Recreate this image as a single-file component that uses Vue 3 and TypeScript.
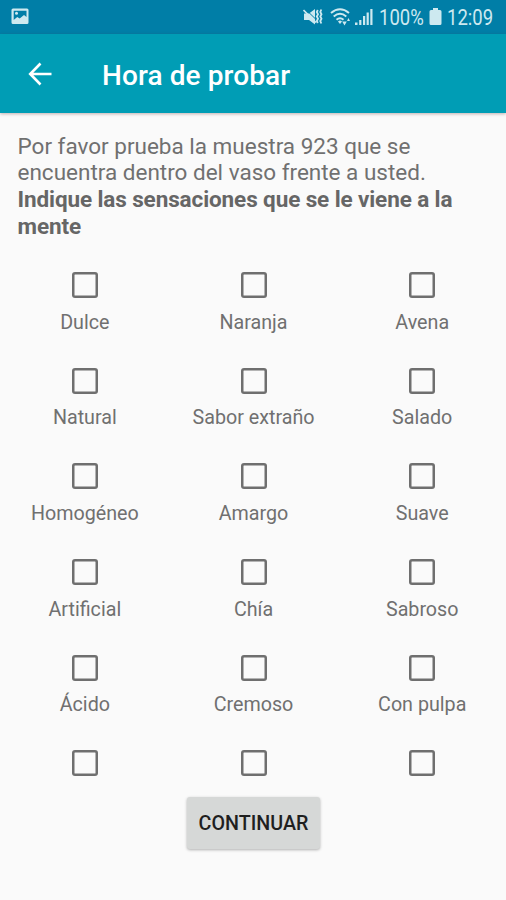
<script setup lang="ts">
import { ref } from 'vue'

interface Sensation {
  id: number
  label: string
}

const names: string[] = [
  'Dulce', 'Naranja', 'Avena',
  'Natural', 'Sabor extraño', 'Salado',
  'Homogéneo', 'Amargo', 'Suave',
  'Artificial', 'Chía', 'Sabroso',
  'Ácido', 'Cremoso', 'Con pulpa',
  '', '', '',
]
const sensations: Sensation[] = names.map((label, id) => ({ id, label }))
const selected = ref<number[]>([])

function toggle(id: number): void {
  selected.value = selected.value.includes(id)
    ? selected.value.filter((item) => item !== id)
    : [...selected.value, id]
}
</script>

<template>
  <div class="screen">
    <div class="status">
      <svg class="picture" width="18" height="17" viewBox="0 0 18 17">
        <path fill-rule="evenodd" d="M2 .5h14q1.500 0 1.500 1.500v12.500q0 1.500-1.500 1.500H2Q.5 16 .5 14.500V2Q.5.5 2 .5zM2.700 2.700v9.300l3.500-3 2.500 1.500 4.300-3.500 2.500 2V2.700z" />
        <circle cx="5.500" cy="5.300" r="1.500" />
      </svg>
      <div class="indicators">
        <svg class="mute" width="20" height="18" viewBox="0 0 20 18">
          <path d="M1 5.500h5L12 1v15.500L6 12H1z" />
          <path class="cut" d="M4 2.700l9 8.700" />
          <path class="line" d="M.5 2l12.500 12.500" />
          <path class="line wave" d="M14.800 2l-1 2 1.200 2.300-1.200 2.200 1.200 2.300-1.200 2.200 1 2M18.300 1.500l-1 2.500 1.200 2.300-1.200 2.200 1.200 2.300-1.200 2.200 1 2.500" />
        </svg>
        <svg class="wifi" width="21" height="18" viewBox="0 0 21 18">
          <path class="line arc" d="M1 5q9-7.500 18 0M3.700 8.400q6.300-5.300 12.600 0M6.500 11.700q3.500-3 7 0" />
          <path d="M8 13.500q2-1.800 4 0l-2 2.500z" />
          <path d="M12.200 13.500h4.600L14.500 17.500zM17 13h3l-1.500-3z" />
        </svg>
        <svg class="signal" width="18" height="18" viewBox="0 0 18 18">
          <path d="M0 14.500h2.500V17H0zM4.200 12h2.200v5H4.200zM8 8h2.200v9H8zM11.600 4.500h2.200V17h-2.200zM15.300 1h2.200v16h-2.200z" />
        </svg>
        <span class="percent"><span>100%</span></span>
        <svg class="battery" width="13" height="18" viewBox="0 0 13 18">
          <path d="M4 0h5v2h2q1.500 0 1.500 1.500v12q0 1.500-1.500 1.500H2Q.5 17 .5 15.500v-12Q.5 2 2 2h2z" />
        </svg>
        <span class="clock"><span>12:09</span></span>
      </div>
    </div>
    <header class="bar">
      <svg class="back" width="24" height="24" viewBox="0 0 24 24">
        <path d="M12.500 1.500L2.200 12l10.300 10.500M2.500 12h21" />
      </svg>
      <h1>Hora de probar</h1>
    </header>
    <main>
      <p class="intro">
        Por favor prueba la muestra 923 que se<br />encuentra dentro del vaso frente a usted.<br />
        <strong>Indique las sensaciones que se le viene a la<br />mente</strong>
      </p>
      <div class="grid">
        <div v-for="item in sensations" :key="item.id" class="cell" @click="toggle(item.id)">
          <span class="box" :class="{ on: selected.includes(item.id) }"></span>
          <span class="label">{{ item.label }}</span>
        </div>
      </div>
      <button class="next" type="button">CONTINUAR</button>
    </main>
  </div>
</template>

<style>
body {
  margin: 0;
  background: #fafafa;
}
</style>

<style scoped>
.screen {
  width: 506px;
  height: 900px;
  overflow: hidden;
  background: #fafafa;
  color: #707070;
  font-family: Roboto, "Liberation Sans", sans-serif;
}
.status {
  display: flex;
  justify-content: space-between;
  box-sizing: border-box;
  height: 34px;
  padding: 8px 11px 0 11px;
  background: #007ea7;
  color: #cde9f0;
}
.status svg {
  fill: #cde9f0;
}
.indicators {
  display: flex;
}
.status .line {
  fill: none;
  stroke: #cde9f0;
  stroke-width: 1.600;
}
.status .wave {
  stroke-width: 1.800;
}
.status .arc {
  stroke-width: 2;
}
.status .cut {
  fill: none;
  stroke: #007ea7;
  stroke-width: 1;
}
.mute {
  margin-right: 7px;
}
.wifi {
  margin-right: 4px;
}
.signal {
  margin-right: 6px;
}
.percent,
.clock {
  display: block;
  font-size: 21.500px;
  line-height: 20px;
  white-space: nowrap;
}
.percent {
  width: 46px;
  margin-right: 4px;
}
.clock {
  width: 48px;
  margin-left: 5px;
}
.percent span,
.clock span {
  display: inline-block;
  transform: scaleX(0.860);
  transform-origin: 0 0;
}
.bar {
  display: flex;
  align-items: center;
  height: 79px;
  padding-left: 28px;
  background: #009db5;
  box-shadow: 0 1px 3px rgba(90, 40, 40, 0.350);
}
.back {
  fill: none;
  stroke: #fff;
  stroke-width: 2.600;
}
h1 {
  margin: 4px 0 0 50px;
  color: #fff;
  font-size: 28px;
  font-weight: 500;
  line-height: 34px;
  letter-spacing: 0.100px;
}
main {
  display: flex;
  flex-direction: column;
  align-items: center;
}
.intro {
  box-sizing: border-box;
  width: 100%;
  margin: 0;
  padding: 19.500px 17.500px 0;
  font-size: 22.500px;
  line-height: 26.800px;
  white-space: nowrap;
}
.intro strong {
  color: #666;
  letter-spacing: -0.110px;
}
.grid {
  display: grid;
  grid-template-columns: repeat(3, 168.700px);
  grid-auto-rows: 95.600px;
  width: 506px;
  height: 534px;
  margin-top: 21.500px;
  padding-left: 1px;
  overflow: hidden;
}
.cell {
  display: flex;
  flex-direction: column;
  align-items: center;
  padding-top: 11px;
}
.box {
  width: 26px;
  height: 26px;
  border-radius: 3px;
  box-shadow: inset 0 0 0 2.500px #6f6f6f;
}
.box.on {
  background: #009db5;
}
.label {
  margin-top: 12.700px;
  font-size: 19.700px;
  line-height: 24px;
}
.next {
  width: 133px;
  height: 52px;
  margin-top: 1.500px;
  margin-left: 1px;
  padding: 2px 0 0;
  border: 0;
  border-radius: 3px;
  background: #d6d8d7;
  box-shadow: 0 1px 3px rgba(0, 0, 0, 0.300);
  color: #1f1f1f;
  font-family: inherit;
  font-size: 19.700px;
  font-weight: 500;
}
</style>
